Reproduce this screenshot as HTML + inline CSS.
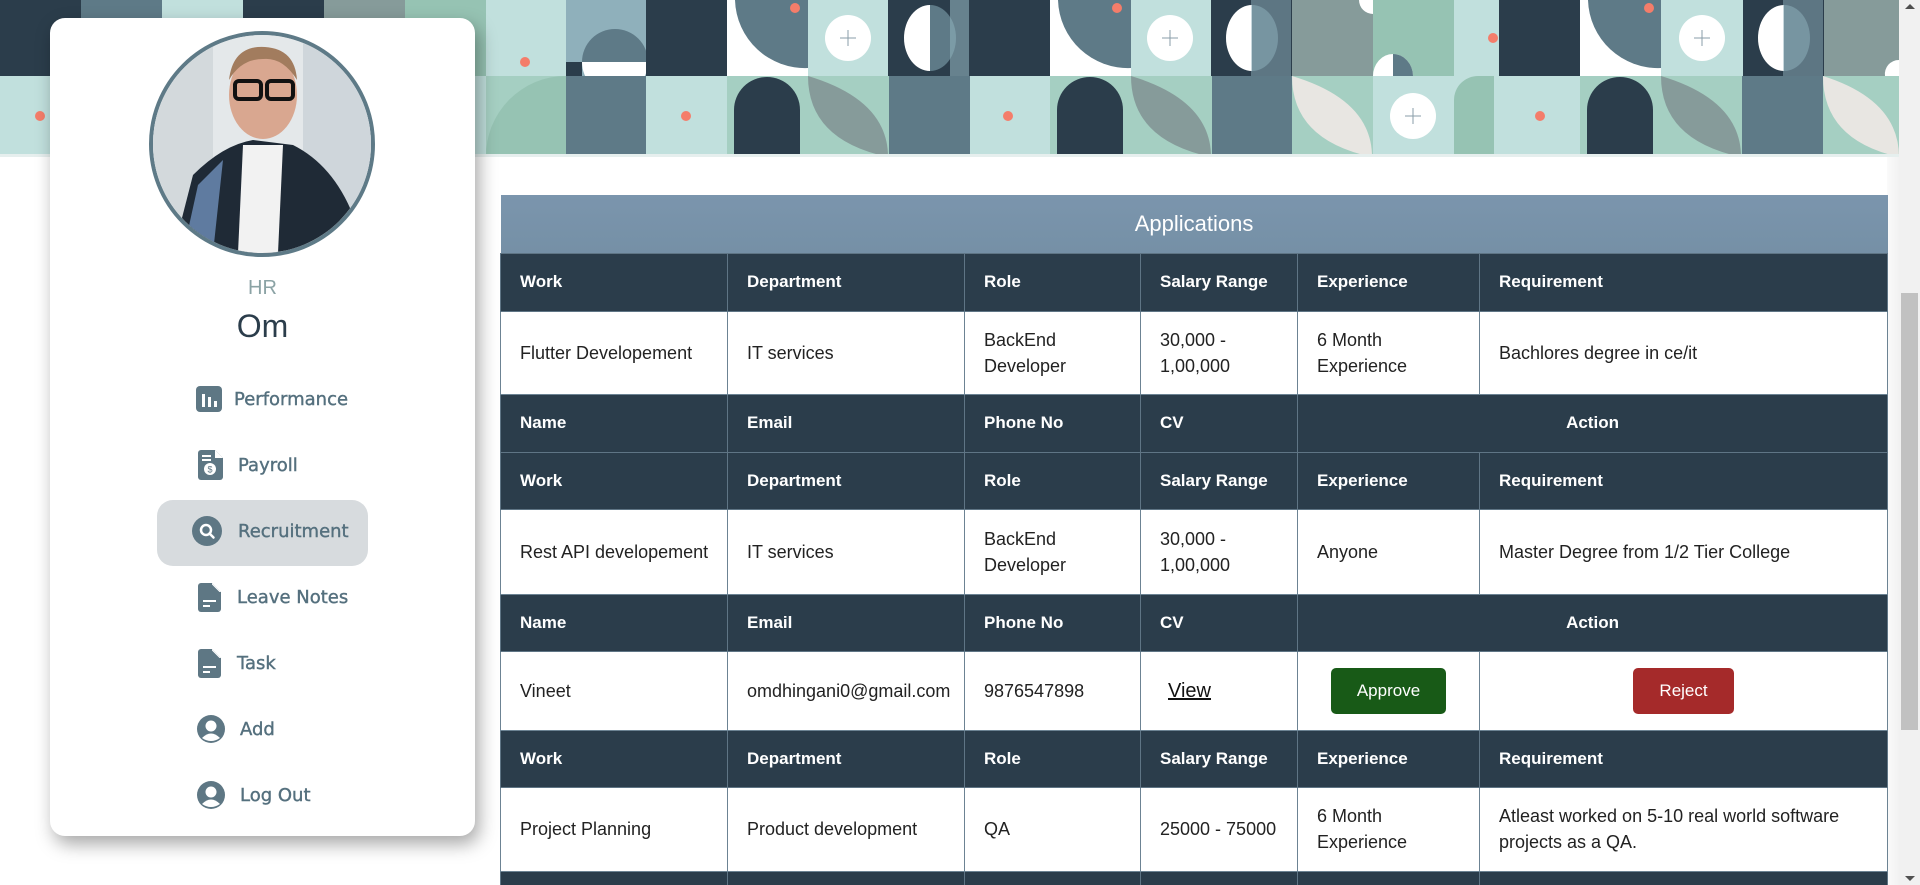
<!DOCTYPE html>
<html><head><meta charset="utf-8">
<style>
*{margin:0;padding:0;box-sizing:border-box}
html,body{width:1920px;height:885px;overflow:hidden;background:#fff;font-family:"Liberation Sans",Arial,sans-serif}
#wrap{position:absolute;left:0;top:0;width:1920px;height:885px;overflow:hidden}
#banner{position:absolute;left:0;top:0;width:1899px;height:157px;overflow:hidden}
#sb{position:absolute;left:1899px;top:0;width:21px;height:885px;background:#f1f1f1}
#sb .th{position:absolute;left:2px;top:293px;width:17px;height:437px;background:#c1c1c1}
#sb .up{position:absolute;left:6px;top:4px;border-left:5px solid transparent;border-right:5px solid transparent;border-bottom:5px solid #505050}
#sb .dn{position:absolute;left:6px;bottom:4px;border-left:5px solid transparent;border-right:5px solid transparent;border-top:5px solid #505050}
#gut{position:absolute;left:1887px;top:157px;width:12px;height:728px;background:linear-gradient(90deg,#fafafa,#f2f2f2)}
#card{position:absolute;left:50px;top:18px;width:425px;height:818px;background:#fff;border-radius:15px;box-shadow:4px 8px 18px rgba(0,0,0,.35)}
#av{position:absolute;left:99px;top:13px;width:226px;height:226px;border-radius:50%;border:4px solid #5e7a87;overflow:hidden;background:#e4e8ea}
.hr{position:absolute;left:0;width:425px;text-align:center;top:259px;font-size:20px;color:#8ba3a5}
.om{position:absolute;left:0;width:425px;text-align:center;top:290px;font-size:32px;color:#2b3d4b}
.mi{position:absolute;left:0;height:40px;display:flex;align-items:center;font-size:18px;color:#55707e;font-family:"DejaVu Sans","Liberation Sans",sans-serif;-webkit-text-stroke:0.4px #55707e}
.mi svg{position:absolute}
.hl{position:absolute;left:107px;top:482px;width:211px;height:66px;background:#d7dbde;border-radius:16px}
#tbl{position:absolute;left:500px;top:195px;width:1387px;border-collapse:collapse;table-layout:fixed;font-size:18px}
#tbl td{border:1px solid #6c8393;padding:0 19px 0 19px;vertical-align:middle;color:#222;line-height:26px;overflow:hidden}
#tbl td:first-child{padding-right:4px}
#tbl tr.h td{background:#2b3d4b;color:#fff;font-weight:bold;border-color:#5f7585;font-size:17px}
#tbl tr.t td{background:linear-gradient(#7b95ad,#7590a6);color:#fff;font-size:22px;text-align:center;padding:0;border:none;font-weight:normal}
.btn{display:inline-block;color:#fff;border-radius:5px;text-align:center;line-height:46px;height:46px;font-size:17px}
</style></head><body><div id="wrap">
<div id="banner">
<svg width="1899" height="157" xmlns="http://www.w3.org/2000/svg">
<rect x="0" y="0" width="1899" height="76" fill="#c1e0dd"/>
<rect x="0" y="0" width="81" height="76" fill="#2b3d4b"/>
<rect x="81" y="0" width="81" height="76" fill="#5e7a87"/>
<rect x="243" y="0" width="81" height="76" fill="#2b3d4b"/>
<rect x="324" y="0" width="81" height="76" fill="#869b9a"/>
<rect x="405" y="0" width="81" height="76" fill="#96c3b3"/>
<circle cx="525" cy="62" r="5" fill="#f47d6a"/>
<rect x="566" y="0" width="81" height="76" fill="#8fb0bb"/>
<path d="M582 62 a33 33 0 0 1 66 0z" fill="#5e7a87"/>
<path d="M582 62 a33 33 0 0 0 66 0z" fill="#fff"/>
<rect x="566" y="62" width="16" height="14" fill="#2b3d4b"/><rect x="646" y="0" width="81" height="76" fill="#2b3d4b"/>
<rect x="727" y="0" width="81" height="76" fill="#fff"/>
<path d="M735 0 A70 70 0 0 0 808 68 L808 0z" fill="#5e7a87"/><circle cx="795" cy="8" r="5" fill="#f47d6a"/>
<circle cx="848" cy="38" r="23" fill="#fff"/><path d="M848 30v16M840 38h16" stroke="#8a9ea8" stroke-width="1"/>
<rect x="888" y="0" width="81" height="76" fill="#2b3d4b"/>
<path d="M930 5 a26 33 0 0 0 0 66z" fill="#fff"/><path d="M930 5 a26 33 0 0 1 0 66z" fill="#5e7a87"/><rect x="950" y="0" width="19" height="76" fill="#8fb0bb" opacity=".6"/>
<rect x="969" y="0" width="81" height="76" fill="#2b3d4b"/>
<rect x="1050" y="0" width="81" height="76" fill="#fff"/>
<path d="M1058 0 A70 70 0 0 0 1131 68 L1131 0z" fill="#5e7a87"/><circle cx="1117" cy="8" r="5" fill="#f47d6a"/>
<circle cx="1170" cy="38" r="23" fill="#fff"/><path d="M1170 30v16M1162 38h16" stroke="#8a9ea8" stroke-width="1"/>
<rect x="1211" y="0" width="81" height="76" fill="#2b3d4b"/>
<path d="M1252 5 a26 33 0 0 0 0 66z" fill="#fff"/><path d="M1252 5 a26 33 0 0 1 0 66z" fill="#5e7a87"/><rect x="1251" y="0" width="40" height="76" fill="#8fb0bb" opacity=".5"/>
<rect x="1292" y="0" width="81" height="76" fill="#869b9a"/><circle cx="1373" cy="0" r="14" fill="#fff"/>
<rect x="1373" y="0" width="81" height="76" fill="#96c3b3"/>
<path d="M1373 76 a20 22 0 0 1 40 0z" fill="#fff"/><path d="M1393 54 a20 22 0 0 1 20 22h-20z" fill="#5e7a87"/>
<circle cx="1493" cy="38" r="5" fill="#f47d6a"/>
<rect x="1499" y="0" width="81" height="76" fill="#2b3d4b"/>
<rect x="1580" y="0" width="81" height="76" fill="#fff"/>
<path d="M1588 0 A70 70 0 0 0 1661 68 L1661 0z" fill="#5e7a87"/><circle cx="1649" cy="8" r="5" fill="#f47d6a"/>
<circle cx="1702" cy="38" r="23" fill="#fff"/><path d="M1702 30v16M1694 38h16" stroke="#8a9ea8" stroke-width="1"/>
<rect x="1743" y="0" width="81" height="76" fill="#2b3d4b"/>
<path d="M1784 5 a26 33 0 0 0 0 66z" fill="#fff"/><path d="M1784 5 a26 33 0 0 1 0 66z" fill="#5e7a87"/><rect x="1783" y="0" width="40" height="76" fill="#8fb0bb" opacity=".5"/>
<rect x="1824" y="0" width="81" height="76" fill="#869b9a"/><path d="M1899 60 a14 14 0 0 0 -14 16h14z" fill="#fff"/>
<rect x="0" y="76" width="1899" height="81" fill="#c1e0dd"/>
<circle cx="40" cy="116" r="5" fill="#f47d6a"/>
<rect x="486" y="76" width="80" height="81" fill="#a5cfc2"/><path d="M566 76 A80 80 0 0 0 486 157 L566 157z" fill="#96c3b3"/>
<rect x="566" y="76" width="80" height="81" fill="#5e7a87"/>
<circle cx="686" cy="116" r="5" fill="#f47d6a"/>
<rect x="727" y="76" width="81" height="81" fill="#a5cfc2"/><path d="M734 157 V110 a33 33 0 0 1 66 0 V157z" fill="#2b3d4b"/>
<rect x="808" y="76" width="81" height="81" fill="#a5cfc2"/><path d="M808 76 Q888 100 888 157 Q808 140 808 76z" fill="#869b9a"/>
<rect x="889" y="76" width="81" height="81" fill="#5e7a87"/>
<circle cx="1008" cy="116" r="5" fill="#f47d6a"/>
<rect x="1050" y="76" width="81" height="81" fill="#a5cfc2"/><path d="M1057 157 V110 a33 33 0 0 1 66 0 V157z" fill="#2b3d4b"/>
<rect x="1131" y="76" width="81" height="81" fill="#a5cfc2"/><path d="M1131 76 Q1211 100 1211 157 Q1131 140 1131 76z" fill="#869b9a"/>
<rect x="1212" y="76" width="81" height="81" fill="#5e7a87"/>
<rect x="1292" y="76" width="81" height="81" fill="#a5cfc2"/><path d="M1292 76 Q1372 100 1372 157 Q1292 140 1292 76z" fill="#e8e6e2"/>
<circle cx="1413" cy="116" r="23" fill="#fff"/><path d="M1413 108v16M1405 116h16" stroke="#8a9ea8" stroke-width="1"/>
<rect x="1454" y="76" width="40" height="81" fill="#c1e0dd"/><path d="M1454 157 V100 a24 24 0 0 1 24 -24 H1494 V157z" fill="#96c3b3"/>
<circle cx="1540" cy="116" r="5" fill="#f47d6a"/>
<rect x="1580" y="76" width="81" height="81" fill="#a5cfc2"/><path d="M1587 157 V110 a33 33 0 0 1 66 0 V157z" fill="#2b3d4b"/>
<rect x="1661" y="76" width="81" height="81" fill="#a5cfc2"/><path d="M1661 76 Q1741 100 1741 157 Q1661 140 1661 76z" fill="#869b9a"/>
<rect x="1742" y="76" width="81" height="81" fill="#5e7a87"/>
<rect x="1823" y="76" width="81" height="81" fill="#a5cfc2"/><path d="M1823 76 Q1899 100 1899 157 Q1823 140 1823 76z" fill="#e8e6e2"/>
<rect x="0" y="154" width="1899" height="3" fill="#e6efee"/>
</svg>
</div>
<div id="gut"></div>
<div id="sb"><div class="up"></div><div class="th"></div><div class="dn"></div></div>

<table id="tbl">
<colgroup><col style="width:227px"><col style="width:237px"><col style="width:176px"><col style="width:157px"><col style="width:182px"><col style="width:408px"></colgroup>
<tr class="t" style="height:58px"><td colspan="6">Applications</td></tr>
<tr class="h" style="height:58px"><td>Work</td><td>Department</td><td>Role</td><td>Salary Range</td><td>Experience</td><td>Requirement</td></tr>
<tr style="height:83px"><td>Flutter Developement</td><td>IT services</td><td>BackEnd Developer</td><td>30,000 - 1,00,000</td><td>6 Month Experience</td><td>Bachlores degree in ce/it</td></tr>
<tr class="h" style="height:58px"><td>Name</td><td>Email</td><td>Phone No</td><td>CV</td><td colspan="2" style="text-align:center;padding:0">Action</td></tr>
<tr class="h" style="height:57px"><td>Work</td><td>Department</td><td>Role</td><td>Salary Range</td><td>Experience</td><td>Requirement</td></tr>
<tr style="height:85px"><td>Rest API developement</td><td>IT services</td><td>BackEnd Developer</td><td>30,000 - 1,00,000</td><td>Anyone</td><td>Master Degree from 1/2 Tier College</td></tr>
<tr class="h" style="height:57px"><td>Name</td><td>Email</td><td>Phone No</td><td>CV</td><td colspan="2" style="text-align:center;padding:0">Action</td></tr>
<tr style="height:79px"><td>Vineet</td><td style="padding-right:0">omdhingani0@gmail.com</td><td>9876547898</td><td style="padding-left:27px"><span style="text-decoration:underline;font-size:20px;color:#111">View</span></td><td style="padding-left:33px;padding-right:0"><span class="btn" style="background:#185a17;width:115px">Approve</span></td><td style="text-align:center;padding:0"><span class="btn" style="background:#a52a2a;width:101px">Reject</span></td></tr>
<tr class="h" style="height:57px"><td>Work</td><td>Department</td><td>Role</td><td>Salary Range</td><td>Experience</td><td>Requirement</td></tr>
<tr style="height:84px"><td>Project Planning</td><td style="padding-right:0">Product development</td><td>QA</td><td>25000 - 75000</td><td>6 Month Experience</td><td>Atleast worked on 5-10 real world software projects as a QA.</td></tr>
<tr class="h" style="height:14px"><td></td><td></td><td></td><td></td><td></td><td></td></tr>
</table>

<div id="card">
<div id="av">
<svg width="218" height="218" viewBox="0 0 218 218">
<rect width="218" height="218" fill="#e4e8ea"/>
<rect x="0" y="0" width="60" height="218" fill="#d3d9dc"/>
<rect x="150" y="0" width="68" height="218" fill="#cfd6db"/>
<path d="M20 218 L40 140 Q70 110 100 105 L140 110 Q180 130 200 180 L210 218z" fill="#1f2a36"/>
<path d="M30 218 L45 150 L70 125 L60 218z" fill="#5f7ba0"/>
<path d="M90 110 L130 110 L125 218 L85 218z" fill="#f2f2f2"/>
<ellipse cx="110" cy="60" rx="34" ry="44" fill="#d9a790"/>
<path d="M76 45 Q80 10 112 12 Q142 14 144 45 Q130 22 110 24 Q88 24 76 45z" fill="#a27c5e"/>
<rect x="82" y="46" width="26" height="18" rx="4" fill="none" stroke="#111" stroke-width="4"/>
<rect x="114" y="46" width="26" height="18" rx="4" fill="none" stroke="#111" stroke-width="4"/>
</svg>
</div>
<div class="hr">HR</div>
<div class="om">Om</div>
<div class="hl"></div>
<div class="mi" style="top:361px;left:146px"><svg width="26" height="26" viewBox="0 0 26 26" style="left:0"><rect width="26" height="26" rx="4" fill="#5e7784"/><rect x="6" y="8" width="3" height="13" fill="#fff"/><rect x="12" y="11" width="3" height="10" fill="#fff"/><rect x="18" y="15" width="3" height="6" fill="#fff"/></svg><span style="margin-left:38px">Performance</span></div>
<div class="mi" style="top:427px;left:148px"><svg width="25" height="30" viewBox="0 0 25 30" style="left:0"><path d="M3 0h14l8 8v19a3 3 0 0 1-3 3H3a3 3 0 0 1-3-3V3a3 3 0 0 1 3-3z" fill="#5e7784"/><path d="M17 0v8h8" fill="#fff"/><rect x="4" y="5" width="9" height="2" fill="#fff"/><rect x="4" y="9" width="9" height="2" fill="#fff"/><circle cx="12" cy="19" r="6" fill="#fff"/><text x="12" y="22.5" font-size="9" text-anchor="middle" fill="#5e7784" font-family="Liberation Sans">$</text></svg><span style="margin-left:40px">Payroll</span></div>
<div class="mi" style="top:493px;left:142px"><svg width="30" height="30" viewBox="0 0 30 30" style="left:0"><circle cx="15" cy="15" r="15" fill="#5e7784"/><circle cx="14" cy="14" r="5" fill="none" stroke="#fff" stroke-width="2.5"/><path d="M17.5 17.5l4 4" stroke="#fff" stroke-width="2.5" stroke-linecap="round"/></svg><span style="margin-left:46px">Recruitment</span></div>
<div class="mi" style="top:559px;left:148px"><svg width="23" height="29" viewBox="0 0 23 29" style="left:0"><path d="M3 0h11l9 9v17a3 3 0 0 1-3 3H3a3 3 0 0 1-3-3V3a3 3 0 0 1 3-3z" fill="#5e7784"/><path d="M14 0v9h9" fill="#fff"/><path d="M14 1.5v7.5h7.5" fill="#5e7784"/><rect x="5" y="17" width="13" height="2" fill="#fff"/><rect x="5" y="22" width="7" height="2" fill="#fff"/></svg><span style="margin-left:39px">Leave Notes</span></div>
<div class="mi" style="top:625px;left:148px"><svg width="23" height="29" viewBox="0 0 23 29" style="left:0"><path d="M3 0h11l9 9v17a3 3 0 0 1-3 3H3a3 3 0 0 1-3-3V3a3 3 0 0 1 3-3z" fill="#5e7784"/><path d="M14 0v9h9" fill="#fff"/><path d="M14 1.5v7.5h7.5" fill="#5e7784"/><rect x="5" y="17" width="13" height="2" fill="#fff"/><rect x="5" y="22" width="7" height="2" fill="#fff"/></svg><span style="margin-left:39px">Task</span></div>
<div class="mi" style="top:691px;left:147px"><svg width="28" height="28" viewBox="0 0 28 28" style="left:0"><circle cx="14" cy="14" r="14" fill="#5e7784"/><circle cx="14" cy="11" r="5.5" fill="#fff"/><path d="M5 23 Q14 14 23 23 Q14 29 5 23z" fill="#fff"/></svg><span style="margin-left:43px">Add</span></div>
<div class="mi" style="top:757px;left:147px"><svg width="28" height="28" viewBox="0 0 28 28" style="left:0"><circle cx="14" cy="14" r="14" fill="#5e7784"/><circle cx="14" cy="11" r="5.5" fill="#fff"/><path d="M5 23 Q14 14 23 23 Q14 29 5 23z" fill="#fff"/></svg><span style="margin-left:43px">Log Out</span></div>
</div>
</div></body></html>
